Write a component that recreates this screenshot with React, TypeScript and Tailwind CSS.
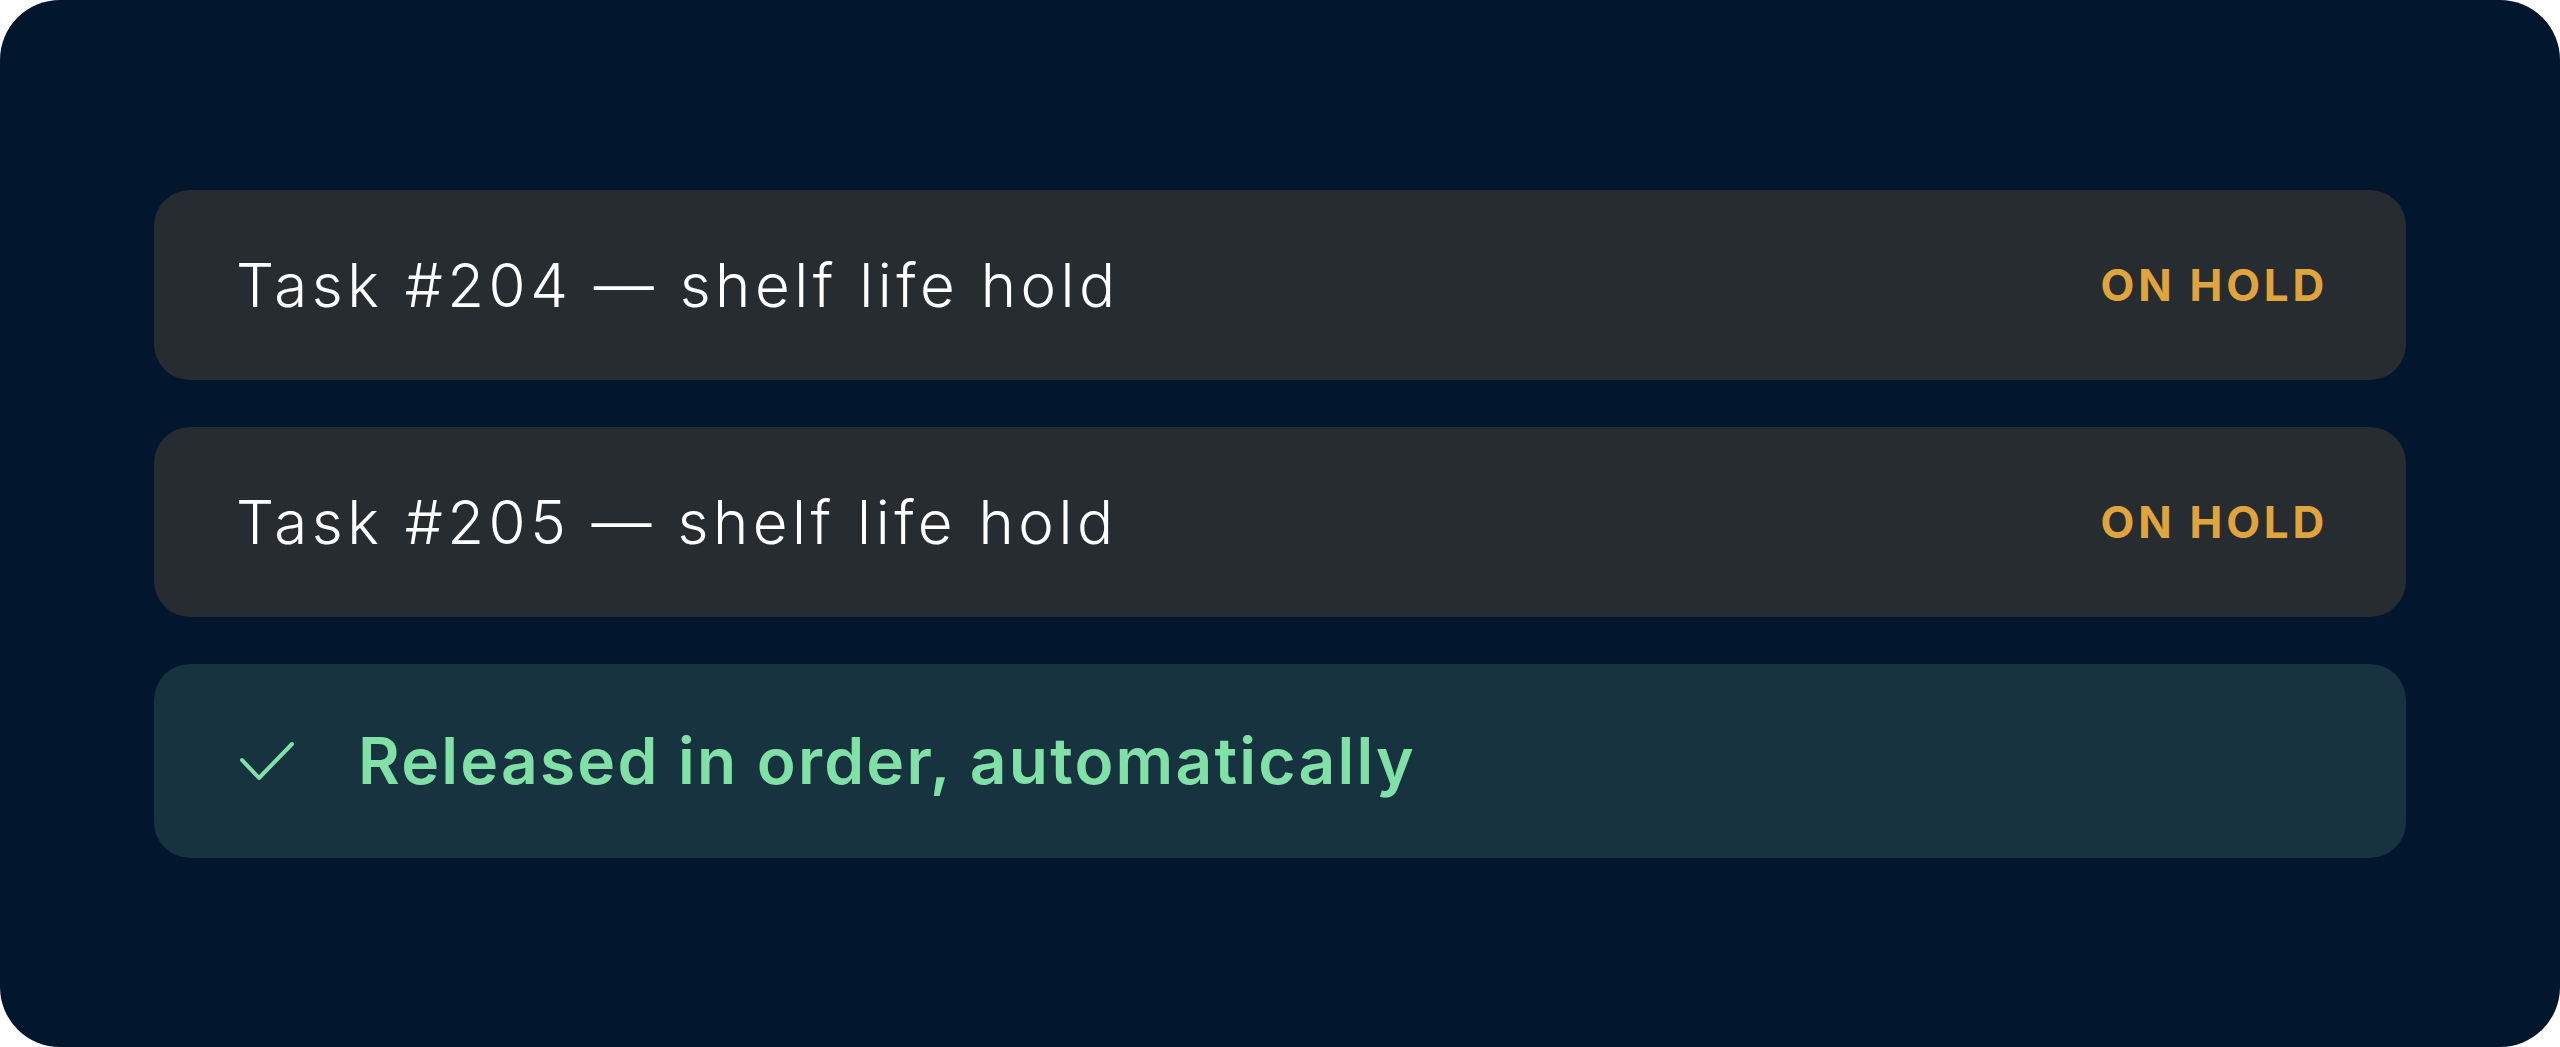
const tasks = [
  { id: 204, note: "shelf life hold" },
  { id: 205, note: "shelf life hold" },
];

function TaskRow({ id, note }: { id: number; note: string }) {
  return (
    <div className="flex h-[190px] items-center justify-between rounded-[36px] bg-[#262c30] px-[82px]">
      <span className="text-[60px] font-light leading-none tracking-[0.075em] text-white">
        Task #{id} — {note}
      </span>
      <span className="-mr-[4px] text-[44px] font-bold uppercase leading-none tracking-[0.085em] text-[#e0a43f]">
        On hold
      </span>
    </div>
  );
}

export default function App() {
  return (
    <div className="bg-white">
      <div
        className="flex h-[1047px] w-full flex-col justify-center gap-[47px] rounded-[60px] bg-[#02162d] px-[154px]"
        style={{ fontFamily: "Inter, Roboto, 'Liberation Sans', sans-serif" }}
      >
        {tasks.map((t) => (
          <TaskRow key={t.id} id={t.id} note={t.note} />
        ))}
        <div className="flex h-[194px] items-center gap-[64px] rounded-[36px] bg-[#183340] px-[86px]">
          <svg width="54" height="40" viewBox="0 0 54 40" fill="none" className="shrink-0">
            <path
              d="M2 19 L19 37 L52 3"
              stroke="#80e0a6"
              strokeWidth="4"
              strokeLinecap="round"
              strokeLinejoin="round"
            />
          </svg>
          <span className="text-[64px] font-semibold leading-none tracking-[0.035em] text-[#80e0a6]">
            Released in order, automatically
          </span>
        </div>
      </div>
    </div>
  );
}
